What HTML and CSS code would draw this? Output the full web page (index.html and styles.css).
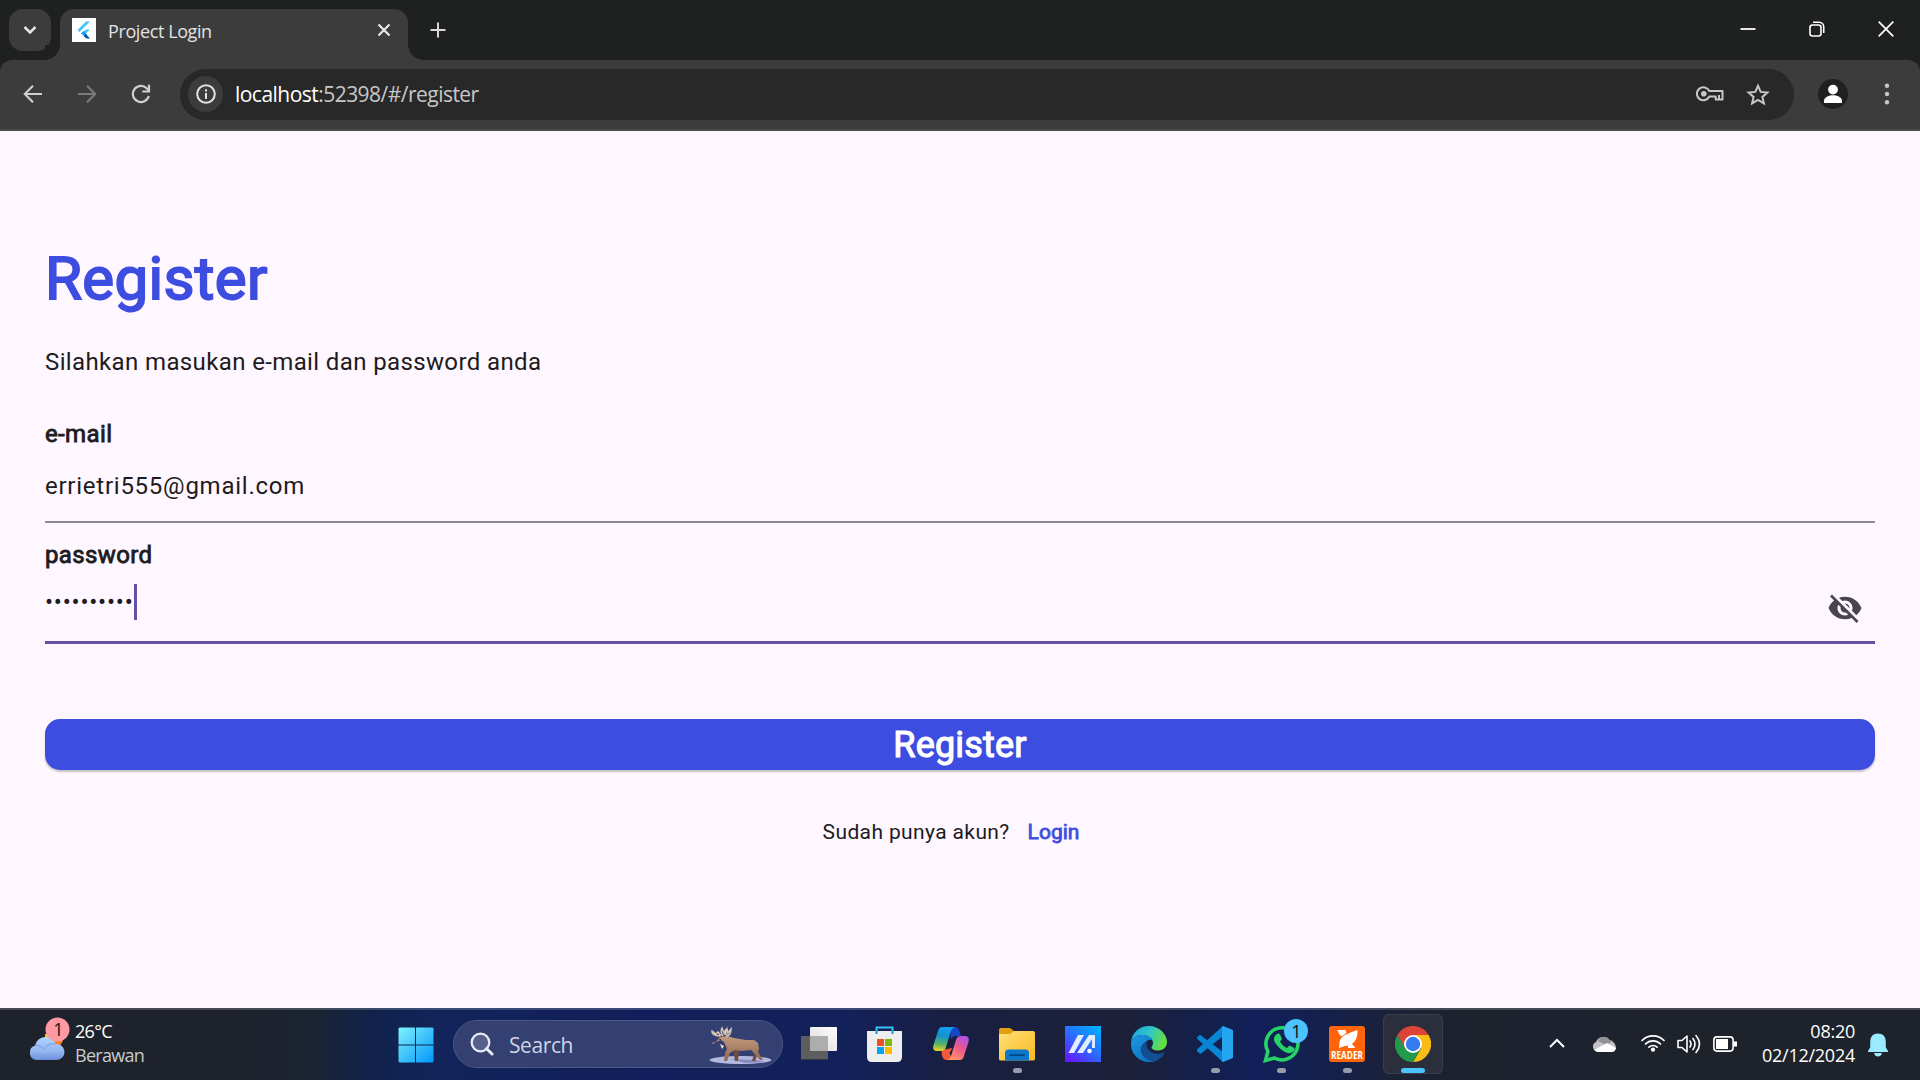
FILE: index.html
```html
<!DOCTYPE html>
<html lang="id">
<head>
<meta charset="utf-8">
<title>Project Login</title>
<link rel="stylesheet" href="styles.css">
</head>
<body>
<header class="tabstrip">
  <button class="tab-search" aria-label="Tabs"><svg width="42" height="42" viewBox="0 0 42 42"><path d="M15.5 18l5.5 5.5 5.5-5.5" fill="none" stroke="#e3e3e3" stroke-width="2.5"/></svg></button>
  <div class="tab">
    <svg class="favicon" width="24" height="24" viewBox="0 0 24 24"><path fill="#fff" d="M0 0h24v24H0z"/><path fill="#47c5fb" d="M14 3.500h4L7.500 14 5.500 12z"/><path fill="#47c5fb" d="M14 11.500h4l-4.500 4.500-3.500.5-1-1z"/><path fill="#1b9ce8" d="M9 15.500l2.500-2.500 3.500 3.500-2.500 1.500z"/><path fill="#00569e" d="M11.500 18l2.300-2 4.200 4.500h-3.500z"/></svg>
    <span class="tab-title">Project Login</span>
    <svg class="tab-close" width="14" height="14" viewBox="0 0 14 14"><path d="M1.500 1.500l11 11m0-11l-11 11" stroke="#e8e8e8" stroke-width="2.200"/></svg>
  </div>
  <svg class="new-tab" width="16" height="16" viewBox="0 0 16 16"><path d="M8 .5v15M.5 8h15" stroke="#d8d8d8" stroke-width="2"/></svg>
  <div class="window-controls">
    <svg width="16" height="16" viewBox="0 0 16 16"><path d="M.5 8h15" stroke="#fff" stroke-width="1.800"/></svg>
    <svg width="16" height="16" viewBox="0 0 16 16" fill="none" stroke="#fff" stroke-width="1.600"><rect x="1" y="4" width="11" height="11" rx="2.500"/><path d="M4 1.300h6.200A4.500 4.500 0 0 1 14.700 5.800V12"/></svg>
    <svg width="16" height="16" viewBox="0 0 16 16"><path d="M.7.7l14.600 14.600m0-14.600L.7 15.300" stroke="#fff" stroke-width="1.700"/></svg>
  </div>
</header>
<nav class="toolbar">
  <svg class="nav-icon" width="20" height="20" viewBox="0 0 20 20" fill="none" stroke="#cfcfcf" stroke-width="2.100"><path d="M19 10H2.500M10 1.800L1.800 10l8.200 8.200"/></svg>
  <svg class="nav-icon" width="20" height="20" viewBox="0 0 20 20" fill="none" stroke="#7b7b7b" stroke-width="2.100"><path d="M1 10h16.500M10 1.800l8.200 8.200-8.200 8.200"/></svg>
  <svg class="nav-icon" width="20" height="20" viewBox="0 0 20 20" fill="none" stroke="#cfcfcf" stroke-width="2.200"><path d="M17.800 12A8.100 8.100 0 1 1 15.700 4.200L18 6.800"/><path d="M18 .8v6.700h-6.700"/></svg>
  <div class="omnibox">
    <span class="site-info"><svg width="20" height="20" viewBox="0 0 20 20"><circle cx="10" cy="10" r="8.800" fill="none" stroke="#e3e3e3" stroke-width="2"/><path d="M10 9v6M10 5.200v2.200" stroke="#e3e3e3" stroke-width="2"/></svg></span>
    <span class="url"><b>localhost</b>:52398/#/register</span>
    <svg class="key" width="28" height="18" viewBox="0 0 28 18" fill="none" stroke="#c7c7c7" stroke-width="2"><path d="M13.300 6H26.500V14.500H19.700V11.500H13.300A6.500 6.500 0 1 1 13.300 6z" stroke-linejoin="round"/><circle cx="7.800" cy="8.700" r="2.800" fill="#c7c7c7" stroke="none"/><path d="M23 10v4"/></svg>
    <svg class="star" width="24" height="23" viewBox="0 0 24 23" fill="none" stroke="#c7c7c7" stroke-width="2"><path d="M12 2.800l2.700 6.100 6.700.6-5 4.400 1.500 6.500-5.900-3.400-5.900 3.400 1.500-6.500-5-4.400 6.700-.6z"/></svg>
  </div>
  <svg class="profile" width="30" height="30" viewBox="0 0 30 30"><circle cx="15" cy="15" r="15" fill="#1f2120"/><circle cx="15" cy="10.600" r="4.900" fill="#fff"/><path d="M6 24v-2.200c0-3.700 5.500-5.500 9-5.500s9 1.800 9 5.500V24z" fill="#fff"/></svg>
  <svg class="menu" width="6" height="22" viewBox="0 0 6 22" fill="#c7c7c7"><circle cx="3" cy="2.700" r="2.200"/><circle cx="3" cy="11" r="2.200"/><circle cx="3" cy="19.300" r="2.200"/></svg>
</nav>

<main class="page">
  <h1 class="heading">Register</h1>
  <p class="subtitle">Silahkan masukan e-mail dan password anda</p>
  <label class="label label-email">e-mail</label>
  <div class="field">errietri555@gmail.com</div>
  <label class="label label-password">password</label>
  <div class="field field-focused">
    <span class="dots">••••••••••</span><span class="caret"></span>
    <svg class="eye" width="36" height="36" viewBox="0 0 24 24" fill="#49454f"><path d="M12 7c2.760 0 5 2.240 5 5 0 .65-.13 1.260-.36 1.830l2.920 2.920c1.510-1.260 2.700-2.890 3.430-4.750-1.730-4.390-6-7.500-11-7.500-1.400 0-2.740.25-3.980.7l2.160 2.160C10.740 7.130 11.350 7 12 7zM2 4.270l2.280 2.280.46.46C3.080 8.300 1.780 10.020 1 12c1.730 4.390 6 7.500 11 7.500 1.550 0 3.030-.3 4.380-.84l.42.42L19.730 22 21 20.730 3.270 3 2 4.270zM7.530 9.800l1.550 1.550c-.05.21-.08.43-.08.65 0 1.660 1.340 3 3 3 .22 0 .44-.03.65-.08l1.550 1.550c-.67.33-1.410.53-2.200.53-2.760 0-5-2.240-5-5 0-.79.2-1.530.53-2.200zm4.310-.78l3.150 3.150.02-.16c0-1.660-1.340-3-3-3l-.17.01z"/></svg>
  </div>
  <button class="submit">Register</button>
  <p class="footer"><span>Sudah punya akun?</span><a class="login">Login</a></p>
</main>

<footer class="taskbar">
  <div class="weather">
    <svg class="weather-icon" width="42" height="46" viewBox="0 0 42 46">
      <defs><linearGradient id="cloud" x2="0" y2="1"><stop offset="0" stop-color="#b4d2fb"/><stop offset=".6" stop-color="#94b9f2"/><stop offset="1" stop-color="#6c8fdc"/></linearGradient></defs>
      <circle cx="26" cy="22" r="9" fill="#f58220"/><path d="M17 17h5v6h-5z" fill="#ffc328"/>
      <path d="M8 43a7.500 7.500 0 0 1-1-14.500 11 11 0 0 1 21-1.500 8 8 0 1 1 1 16z" fill="url(#cloud)"/><path d="M7 28.500q5-.5 9 4M16 32q4-6 12-5" fill="none" stroke="#7fa5e8" stroke-width="1.200"/>
      <circle cx="29.500" cy="12.500" r="12" fill="#ff99a4"/><text x="30.500" y="18.800" class="badge-text">1</text>
    </svg>
    <div class="weather-text"><span>26°C</span><span class="muted">Berawan</span></div>
  </div>
  <div class="apps">
    <div class="app start"><svg width="36" height="36" viewBox="0 0 36 36"><defs><linearGradient id="win" gradientUnits="userSpaceOnUse" x1="0" y1="0" x2="36" y2="36"><stop stop-color="#80f4ff"/><stop offset=".5" stop-color="#40c3fb"/><stop offset="1" stop-color="#0095fc"/></linearGradient></defs><path fill="url(#win)" d="M1.500.5H17v17H.5v-16zM18 .5h16.500l1 1v16H18zM.5 18.500H17v17H1.500l-1-1zM18 18.500h17.500v16l-1 1H18z"/></svg></div>
    <div class="search">
      <svg width="24" height="24" viewBox="0 0 24 24" fill="none" stroke="#e8ebf4" stroke-width="2.300"><circle cx="10.500" cy="10.500" r="8.800" fill="#55618a"/><path d="M16.500 16.500l5.500 5.500" stroke-width="3" stroke-linecap="round"/></svg>
      <span class="search-text">Search</span>
      <svg class="moose" width="64" height="40" viewBox="0 0 64 40"><defs><linearGradient id="moose" x2="0" y2="1"><stop stop-color="#c39a7d"/><stop offset="1" stop-color="#8d6650"/></linearGradient></defs><ellipse cx="32.500" cy="34" rx="31" ry="4" fill="#b3b8df"/><path d="M22 33l26 1 8 2-18 1z" fill="#8589bd"/><path d="M25 22l2 13h3l1-12zM45 20l1 8-2 7h3l3-8z" fill="#714c3c"/><path d="M6 18l6-7 7-1 7 2 12 2 8 0 4 3 1 6-1 3 5 8h-3l-6-7-3-3-10 1-6-1-5 3-3 8h-3l1-8 2-4-3-7-3-2-5 2-5 1z" fill="url(#moose)"/><path d="M12 18l4 2-2 3z" fill="#eee0d4"/><path d="M12 10Q3 9 4 5l4 3 2-2 3 4M15 10q-3-4-1-8l2 5 2-4 0 6M18 10q5 0 5-7l-3 4-1-4-2 6" fill="none" stroke="#d8c5b3" stroke-width="1.500"/><circle cx="12" cy="13.500" r=".8" fill="#291b17"/></svg>
    </div>
    <div class="app"><svg width="36" height="36" viewBox="0 0 36 36"><defs><linearGradient id="tv" x1="1" y1="0" x2="0" y2="1"><stop stop-color="#fff"/><stop offset="1" stop-color="#d9d9dc"/></linearGradient></defs><rect y="10" width="27" height="24" rx="1" fill="#5e5e60"/><path d="M0 33h27v1H0z" fill="#343742"/><rect x="9" y="1" width="27" height="24" rx="1" fill="url(#tv)"/><path d="M9 10h18v15H9z" fill="#adadae"/></svg></div>
    <div class="app"><svg width="36" height="36" viewBox="0 0 36 36"><path d="M9.500 8V1.500h16V8" fill="none" stroke="#31c3f4" stroke-width="2"/><path d="M0 5h35v26q0 5-5 5H5q-5 0-5-5z" fill="#eeeeef"/><path d="M9.500 8V5m16 3V5" stroke="#1696d5" stroke-width="2"/><path fill="#f25022" d="M10 13h7v7h-7z"/><path fill="#7fba00" d="M18 13h7v7h-7z"/><path fill="#00a4ef" d="M10 21h7v7h-7z"/><path fill="#ffb900" d="M18 21h7v7h-7z"/></svg></div>
    <div class="app"><svg width="36" height="36" viewBox="0 0 36 36"><defs><linearGradient id="cp1" x1=".3" y1="0" x2=".2" y2="1"><stop stop-color="#139df0"/><stop offset=".35" stop-color="#1592cf"/><stop offset=".7" stop-color="#54b565"/><stop offset="1" stop-color="#f1d528"/></linearGradient><linearGradient id="cp2" x1=".8" y1="0" x2=".2" y2="1"><stop stop-color="#aa52e8"/><stop offset=".45" stop-color="#ec578e"/><stop offset="1" stop-color="#ff9a60"/></linearGradient></defs><path d="M17 1h5q3 0 4 3l2 6h-5q-4 0-5 4z" fill="#1746c9"/><path d="M9 24l-.5 4 1 3q1 3 4 3h6l-3-7 3-5z" fill="#f4583c"/><path d="M9 1h13q-3 1-4 4l-5 16q-1 4-5 4H4q-5 0-3.500-6L5 5q1-4 4-4z" fill="url(#cp1)"/><path d="M27 34H14q3-1 4-4l5-16q1-4 5-4h4q5 0 3.500 6L31 30q-1 4-4 4z" fill="url(#cp2)"/></svg></div>
    <div class="app running"><svg width="36" height="36" viewBox="0 0 36 36"><defs><linearGradient id="fold" x2="1" y2="1"><stop stop-color="#ffe07a"/><stop offset="1" stop-color="#f8b91f"/></linearGradient></defs><path d="M0 4q0-2 2-2h9l4 3v4H0z" fill="#e0a010"/><path d="M0 8h11l4-3h19q2 0 2 2v26q0 1.500-2 1.500H2Q0 34.500 0 33z" fill="url(#fold)"/><path d="M6 34.500V27q0-3.500 3.500-3.500h17Q30 23.500 30 27v7.500z" fill="#0b77cd"/><path d="M11 29h14" stroke="#034b8b" stroke-width="2" stroke-linecap="round"/></svg></div>
    <div class="app"><svg width="36" height="36" viewBox="0 0 36 36"><defs><linearGradient id="asus" x1=".1" y1="1" x2=".9" y2="0"><stop stop-color="#6717ff"/><stop offset=".5" stop-color="#2b6bff"/><stop offset="1" stop-color="#00b0ff"/></linearGradient></defs><path fill="url(#asus)" d="M0 0h36v36H0z"/><g fill="#e3ebff"><path d="M13 9h6L9 27H3.500z"/><path d="M24 9h6v13h-3V13l-9 14h-6z"/><circle cx="24.500" cy="25" r="2.300" fill="#fff"/></g></svg></div>
    <div class="app"><svg width="36" height="36" viewBox="0 0 36 36"><defs><linearGradient id="eg1" x2="1" y2=".3"><stop stop-color="#16a4e0"/><stop offset=".55" stop-color="#30c6c7"/><stop offset="1" stop-color="#64de45"/></linearGradient><linearGradient id="eg2" x1="0" y1="0" x2="1" y2="1"><stop stop-color="#1b9de2"/><stop offset="1" stop-color="#0b64b8"/></linearGradient></defs><path d="M0 18C0 7 8 0 18 0s18 8 18 16c0 5-4 8.500-9 8.500-4 0-6.500-1.500-6.500-3 0-1 1.500-2 1.500-4.500C22 12 17 9 11 9 5 9 0 13 0 18z" fill="url(#eg1)"/><path d="M0 18C0 13 5 9 11 9c5 0 9 2 10.500 5-5-1.500-8 2-8 6 0 8 8 14 14.500 13A18 18 0 0 1 0 18z" fill="url(#eg2)"/><path d="M16 15c-6 3-8 8-5 13 3 6 11 9 17 5 3-2 5-4 6-7-4 2-9 2.500-13 .5-5-2.500-6.500-7-5-11.500z" fill="#124f90"/></svg></div>
    <div class="app running"><svg width="36" height="36" viewBox="0 0 36 36"><path fill="#0879bd" d="M0 11.500l3-2.500 25 19-2 8-24-23z"/><path fill="#0d6fae" d="M26 0l1 9L5 27l-2 1-3-3 .5-1.500z"/><path fill="#0886d4" d="M0 23.500L26 0v10L3.500 27.500 0 25zM0 11.500L3 9l23 17v10L.5 13z"/><path fill="#25a5f0" d="M26 0l10 4v28l-10 4-1-1V1z"/></svg></div>
    <div class="app running"><svg width="48" height="44" viewBox="0 0 48 44" class="whatsapp"><path d="M2.500 41.500l2.400-9A16 16 0 1 1 11.500 39z" fill="none" stroke="#25d366" stroke-width="3.600"/><path d="M12 17q3-4 5-1.500l2 4.500-2 2.500q3 5 7 6.500l2.500-2.500 5 2.500q.5 4-4 5-5 1-11-5t-5.500-9q0-2 1-3z" fill="#25d366"/><circle cx="33" cy="12" r="12" fill="#4cc2ff"/><text x="33.500" y="18.500" class="badge-text">1</text></svg></div>
    <div class="app running"><svg class="reader" width="36" height="36" viewBox="0 0 36 36"><rect width="36" height="36" rx="3" fill="#ff6508"/><path fill="#fff" d="M28.500 4Q29 15 22 18.500q-2 1-6 1.500L10 22l.5-5.500q.5-5 5.500-7.500Q22 6 28.500 4zM8.500 4h8l1 3-5 3.500q-3-2-4-6.500zM19 19.500l4-1.500 3.500 4H19z"/><text x="18" y="32.500" class="reader-text" textLength="32" lengthAdjust="spacingAndGlyphs">READER</text></svg></div>
    <div class="app running active"><svg width="36" height="36" viewBox="0 0 36 36"><path fill="#db4437" d="M2.400 9A18 18 0 0 1 33.600 9H18L10 22.500z"/><path fill="#f9bc15" d="M33.600 9A18 18 0 0 1 18 36l8-13.500L18 9z"/><path fill="#229a4c" d="M18 36A18 18 0 0 1 2.400 9l7.800 13.500L18 27l7.800-4.500z"/><circle cx="18" cy="18" r="9" fill="#fff"/><circle cx="18" cy="18" r="7.200" fill="#347cf0"/></svg></div>
  </div>
  <div class="tray">
    <svg class="chevron" width="16" height="10" viewBox="0 0 16 10"><path d="M1 9l7-7 7 7" fill="none" stroke="#fff" stroke-width="2"/></svg>
    <svg class="onedrive" width="24" height="16" viewBox="0 0 24 16"><path d="M5 15.500A5 5 0 0 1 4 6 8 8 0 0 1 18 4.500q5 1 6 7-1 4-4 4z" fill="#c3c3c5"/><path d="M7 3.500Q12-2 18 4l3 1-7 4-8-4z" fill="#929294"/><path d="M2 14l13-7 9 5q-1 4-4 4H5z" fill="#fff"/></svg>
    <svg class="wifi" width="24" height="18" viewBox="0 0 24 18" fill="none" stroke="#fff" stroke-width="1.700" stroke-linecap="round"><path d="M1 6.500a15.500 15.500 0 0 1 22 0M4.500 10a10.500 10.500 0 0 1 15 0M8 13.200a5.600 5.600 0 0 1 8 0"/><circle cx="12" cy="15.700" r="1.300" fill="#fff"/></svg>
    <svg class="speaker" width="24" height="20" viewBox="0 0 24 20" fill="none" stroke="#fff" stroke-width="1.600" stroke-linejoin="round" stroke-linecap="round"><path d="M1 6.500h4L10 2v16l-5-4.500H1zM13 7q2 3 0 6M16 4.500q4 5.500 0 11M19 1.500q7 8.500 0 17"/></svg>
    <svg class="battery" width="24" height="16" viewBox="0 0 24 16"><rect x=".9" y=".9" width="19.200" height="14.200" rx="3" fill="none" stroke="#fff" stroke-width="1.600"/><path d="M3 3h12v10H3zM20.500 5.500H24v5h-3.500z" fill="#fff"/></svg>
    <div class="clock"><span>08:20</span><span>02/12/2024</span></div>
    <svg class="bell" width="20" height="24" viewBox="0 0 20 24" fill="#99ebff"><path d="M10 .5q7.500 0 7.800 8v6l2.200 3.500v1H0v-1l2.200-3.500v-6q.3-8 7.800-8zM6 20h8q-1 3.500-4 3.500T6 20z"/></svg>
  </div>
</footer>
</body>
</html>
```
FILE: styles.css
```css
* { box-sizing: border-box; }
body {
  margin: 0;
  width: 1920px;
  height: 1080px;
  overflow: hidden;
  display: grid;
  grid-template-rows: 60px 71px 877px 72px;
  font-family: "Open Sans", "Noto Sans", sans-serif;
  background: #1f2120;
}
svg { display: block; flex: none; }
button { border: 0; padding: 0; font: inherit; }

.tabstrip { display: flex; align-items: flex-start; padding: 9px 12px 0 9px; background: #1f2120; }
.tab-search { width: 42px; height: 42px; border-radius: 14px; background: #3c3c3c; }
.tab {
  position: relative;
  display: flex;
  align-items: center;
  width: 348px;
  height: 51px;
  margin-left: 9px;
  padding: 0 17px 9px 12px;
  border-radius: 14px 14px 0 0;
  background: #3c3c3c;
}
.tab::before, .tab::after {
  content: "";
  position: absolute;
  bottom: 0;
  width: 15px;
  height: 15px;
}
.tab::before { left: -15px; background: radial-gradient(circle at 0 0, #1f2120 14.500px, #3c3c3c 15px); }
.tab::after { right: -15px; background: radial-gradient(circle at 100% 0, #1f2120 14.500px, #3c3c3c 15px); }
.tab-title { margin-left: 12px; padding-top: 2px; font-size: 18px; line-height: 24px; letter-spacing: -.4px; color: #e3e3e3; }
.tab-close { margin-left: auto; }
.new-tab { margin: 13px 0 0 22px; }
.window-controls { display: flex; gap: 53px; margin: 12px 14px 0 auto; }

.toolbar {
  display: flex;
  align-items: center;
  padding: 1px 30px 2px 23px;
  background: #3c3c3c;
  border-bottom: 2px solid #4a4a4a;
  border-radius: 12px 12px 0 0;
}
.nav-icon + .nav-icon { margin-left: 34px; }
.omnibox {
  display: flex;
  align-items: center;
  width: 1614px;
  height: 51px;
  margin-left: 29px;
  padding: 0 24px 0 8px;
  border-radius: 26px;
  background: #282828;
}
.site-info { display: grid; place-items: center; width: 35px; height: 36px; border-radius: 50%; background: #3c3c3c; }
.url { margin-left: 12px; font-size: 21px; line-height: 30px; letter-spacing: -.53px; color: #c7c7c7; }
.url b { font-weight: 400; color: #fff; }
.key { margin-left: auto; }
.star { margin-left: 22px; }
.profile { margin-left: 24px; }
.menu { margin-left: auto; }

.page {
  display: flex;
  flex-direction: column;
  padding: 113px 45px 0;
  background: #fef7ff;
  color: #1d1b20;
  font-family: Roboto, sans-serif;
  font-size: 24px;
  line-height: 28px;
}
.heading { margin: 0; font-size: 60px; font-weight: 400; line-height: 70px; letter-spacing: .35px; color: #3d4de0; -webkit-text-stroke: 1.900px; }
.subtitle { margin: 34px 0 0; letter-spacing: .375px; }
.label { letter-spacing: .375px; -webkit-text-stroke: .850px; }
.label-email { margin-top: 44px; }
.label-password { margin-top: 18px; }
.field { margin-top: 24px; padding-bottom: 21px; border-bottom: 2px solid #8c8791; letter-spacing: .75px; }
.field-focused { display: flex; align-items: flex-start; height: 60px; margin-top: 15px; border-bottom: 3px solid #6750a4; }
.dots { line-height: 36px; }
.caret { width: 3px; height: 36px; margin-left: .5px; background: #6750a4; }
.eye { margin: 6px 12px 0 auto; }
.submit {
  height: 51px;
  margin-top: 75px;
  padding-top: 2px;
  border-radius: 15px;
  background: #3d4de0;
  box-shadow: 0 2px 2px rgba(0, 0, 0, .22);
  color: #fff;
  font-size: 36px;
  line-height: 49px;
  letter-spacing: .2px;
  -webkit-text-stroke: 1.150px;
}
.footer { display: flex; justify-content: center; gap: 18px; margin: 50px 18px 0 0; font-size: 21px; line-height: 25px; letter-spacing: .375px; }
.login { color: #3d4de0; letter-spacing: 0; -webkit-text-stroke: .780px; }

.taskbar {
  display: flex;
  align-items: flex-start;
  padding: 0 32px 0 28px;
  border-top: 2px solid rgba(255, 255, 255, .18);
  background: linear-gradient(90deg, #1e222b 0, #1e222b 230px, #1b2431 310px, #10224c 375px, #12245a 440px, #111e5b 650px, #13215a 850px, #191f40 950px, #1c203a 1130px, #14204a 1200px, #11205a 1260px, #14204a 1330px, #1c2235 1400px, #1d222c 1480px, #1c2330 1560px, #1e222b 1640px) border-box;
  color: #fff;
  font-size: 18px;
  line-height: 24px;
}
.weather { display: flex; width: 358px; padding-top: 7px; }
.weather-text { display: flex; flex-direction: column; margin: 2px 0 0 5px; letter-spacing: -.7px; }
.muted { color: #c9cbcd; }
.badge-text { font: 18px "Open Sans", sans-serif; text-anchor: middle; fill: #111; }
.apps { display: flex; gap: 6px; padding-top: 4px; }
.app { position: relative; display: grid; place-items: center; width: 60px; height: 60px; border-radius: 6px; }
.start { margin-right: 1px; }
.start svg { margin-top: 1px; }
.search {
  display: flex;
  align-items: center;
  width: 330px;
  height: 48px;
  margin: 6px 0 0;
  padding: 0 10px 0 16px;
  border: 1.500px solid #4d5983;
  border-radius: 24px;
  background: #343f72;
  font-size: 21px;
  color: #cfd4e4;
}
.search-text { margin: 1px auto 0 15px; letter-spacing: -.4px; }
.moose { margin-top: 3px; }
.running::after {
  content: "";
  position: absolute;
  left: 25.500px;
  top: 54px;
  width: 9px;
  height: 5px;
  border-radius: 3px;
  background: #999cad;
}
.active { background: #2b2f3c; box-shadow: inset 0 0 0 1px #3a3e4b; }
.active::after { left: 18px; width: 24px; background: #4cc2ff; }
.whatsapp { margin: -7px 0 0 11px; }
.reader { overflow: visible; }
.reader-text { font: 700 11px "Open Sans", sans-serif; text-anchor: middle; fill: #fff; }
.tray { display: flex; margin-left: auto; }
.chevron { margin-top: 28px; }
.onedrive { margin: 26px 0 0 27px; }
.wifi { margin: 24px 0 0 25px; }
.speaker { margin: 24px 0 0 12px; }
.battery { margin: 26px 0 0 12px; }
.clock { display: flex; flex-direction: column; align-items: flex-end; width: 118px; margin-top: 9px; letter-spacing: -.25px; }
.bell { margin: 23px 0 0 13px; }
```
